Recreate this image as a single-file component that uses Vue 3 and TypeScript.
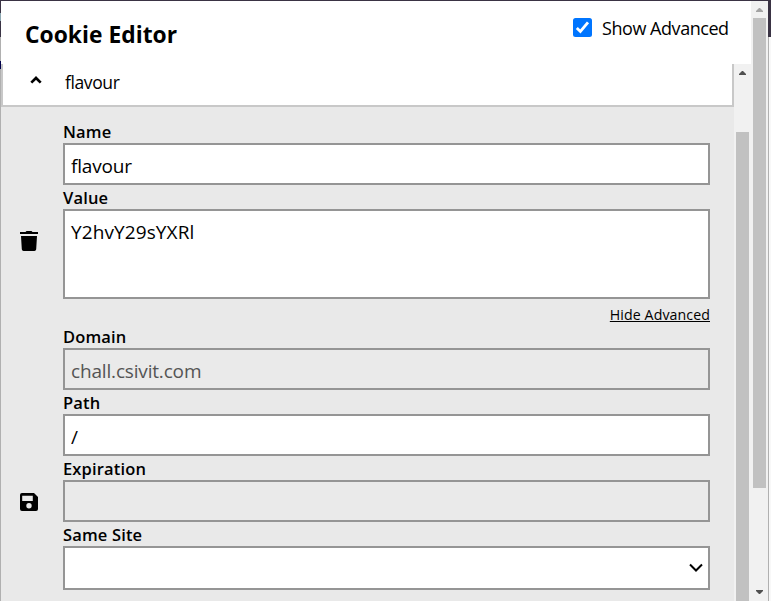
<script setup lang="ts">
import { ref } from 'vue'

const showAdvanced = ref<boolean>(true)
const name = ref<string>('flavour')
const value = ref<string>('Y2hvY29sYXRl')
const domain = ref<string>('chall.csivit.com')
const path = ref<string>('/')
const expiration = ref<string>('')
const sameSite = ref<string>('')
</script>

<template>
  <div class="window">
    <div class="edge-left"><i class="mark"></i><i class="tab"></i></div>
    <main class="popup">
      <header class="header">
        <h1 class="title"><span>Cookie Editor</span></h1>
        <label class="toggle">
          <input v-model="showAdvanced" class="native" type="checkbox" />
          <span class="check">
            <svg viewBox="0 0 19 19" width="19" height="19">
              <rect width="19" height="19" rx="2.5" fill="#0075ff" />
              <path v-if="showAdvanced" d="M3.8 9.9 7.4 13.5 15 4.3" fill="none" stroke="#fff" stroke-width="2.8" />
            </svg>
          </span>
          <span class="toggle-text">Show Advanced</span>
        </label>
      </header>
      <div class="scroller">
        <section class="cookie">
          <div class="cookie-head">
            <svg class="chevron" viewBox="0 0 14 10" width="14" height="10">
              <path d="M2.3 7.6 7 3l4.700 4.600" fill="none" stroke="#000" stroke-width="2.7" />
            </svg>
            <span class="cookie-name">flavour</span>
          </div>
          <div class="cookie-body">
            <div class="actions">
              <button class="icon-button trash" aria-label="Delete">
                <svg viewBox="0 0 18 20" width="18" height="20">
                  <path d="M0 1h5.500L6.500 0h5L12.500 1H18v2H0zM1 5h16l-.8 13.200Q16 20 14.400 20H3.600Q2 20 1.800 18.200z" />
                </svg>
              </button>
              <button class="icon-button save" aria-label="Save">
                <svg viewBox="0 0 18 18" width="18" height="18">
                  <path fill-rule="evenodd" d="M2 0h12l4 4v12a2 2 0 0 1-2 2H2a2 2 0 0 1-2-2V2a2 2 0 0 1 2-2zM2.200 2.700v5.300h10.600V2.700zM9 10a2.700 2.700 0 1 0 0 5.400A2.700 2.700 0 0 0 9 10z" />
                </svg>
              </button>
            </div>
            <form class="fields" @submit.prevent>
              <label class="label" for="name"><span>Name</span></label>
              <input id="name" v-model="name" class="control" />
              <label class="label" for="value"><span>Value</span></label>
              <textarea id="value" v-model="value" class="control area"></textarea>
              <a class="advanced-link" @click="showAdvanced = !showAdvanced"><span>Hide Advanced</span></a>
              <template v-if="showAdvanced">
                <label class="label" for="domain"><span>Domain</span></label>
                <input id="domain" v-model="domain" class="control" disabled />
                <label class="label" for="path"><span>Path</span></label>
                <input id="path" v-model="path" class="control" />
                <label class="label" for="expiration"><span>Expiration</span></label>
                <input id="expiration" v-model="expiration" class="control" disabled />
                <label class="label" for="site"><span>Same Site</span></label>
                <div id="site" class="control select" role="combobox">
                  {{ sameSite }}
                  <svg viewBox="0 0 14 10" width="14" height="10">
                    <path d="M1 1.500 7 7.500l6-6" fill="none" stroke="#000" stroke-width="2" />
                  </svg>
                </div>
              </template>
            </form>
          </div>
        </section>
        <div class="bar inner">
          <svg class="arrow" viewBox="0 0 17 17" width="17" height="17"><path d="M5 11h7v-1L9 7H8l-3 3z" fill="#505050" /></svg>
          <i class="thumb"></i>
        </div>
      </div>
    </main>
    <div class="bar outer">
      <svg class="arrow" viewBox="0 0 17 17" width="17" height="17"><path d="M5 11h7v-1L9 7H8l-3 3z" fill="#a3a3a3" /></svg>
      <i class="thumb"></i>
      <svg class="arrow" viewBox="0 0 17 17" width="17" height="17"><path d="M5 6h7v1l-3 3H8L5 7z" fill="#505050" /></svg>
    </div>
    <div class="edge-right"><i class="dark"></i></div>
  </div>
</template>

<style>
body {
  overflow: hidden;
}
</style>

<style scoped>
* {
  box-sizing: border-box;
}
.window {
  width: 771px;
  height: 601px;
  display: flex;
  border-top: 1px solid #3a3344;
  background: #fff;
  color: #000;
  font-family: 'Open Sans', 'Noto Sans', sans-serif;
  font-weight: 400;
  overflow: hidden;
}
.edge-left {
  width: 1px;
  flex: none;
  padding-top: 12px;
  background: linear-gradient(#3a3344 36px, #b0b0b0 36px);
}
.mark {
  display: block;
  height: 8px;
  background: #8ba6b0;
}
.tab {
  display: block;
  height: 8px;
  margin-top: 40px;
  background: #00004a;
}
.popup {
  width: 750px;
  flex: none;
}
.header {
  height: 63px;
  display: flex;
  justify-content: space-between;
  padding: 17px 23px 0 24px;
}
.title {
  margin: 0;
  height: 34px;
  font-size: 22.800px;
  line-height: 34px;
  font-weight: 700;
  letter-spacing: 0.030px;
  white-space: nowrap;
}
.toggle {
  height: 19px;
  display: flex;
  align-items: center;
  gap: 10px;
}
.native {
  position: absolute;
  opacity: 0;
}
.check {
  width: 19px;
  height: 19px;
}
.check svg,
.icon-button svg,
.arrow {
  display: block;
}
.toggle-text {
  width: 126px;
  font-size: 18px;
  line-height: 20px;
  letter-spacing: -0.450px;
  white-space: nowrap;
}
.scroller {
  height: 537px;
  display: flex;
}
.cookie {
  width: 733px;
  background: #e9e9e9;
}
.cookie-head {
  height: 43px;
  display: flex;
  align-items: flex-start;
  padding: 11px 0 0 26px;
  background: #fff;
  border: solid #c8c8c8;
  border-width: 0 2px 2px;
}
.chevron {
  margin-top: 0;
}
.cookie-name {
  margin-left: 22px;
  margin-top: -6px;
  font-size: 17.500px;
  line-height: 26px;
  letter-spacing: -0.400px;
}
.cookie-body {
  height: 494px;
  display: flex;
}
.actions {
  width: 62px;
  padding: 124px 0 0 19px;
}
.icon-button {
  display: block;
  padding: 0;
  border: 0;
  background: none;
}
.save {
  margin-top: 242px;
}
.fields {
  width: 647px;
  padding-top: 12px;
}
.label {
  display: block;
  height: 24px;
  font-size: 16.500px;
  line-height: 25px;
  font-weight: 600;
  letter-spacing: 0.150px;
  white-space: nowrap;
}
.control {
  display: block;
  width: 647px;
  height: 42px;
  margin: 0;
  padding: 4px 6px 0;
  border: 2px solid #959595;
  border-radius: 0;
  outline: 0;
  background: #fff;
  color: #000;
  font-family: inherit;
  font-weight: inherit;
  font-size: 19px;
  letter-spacing: -0.170px;
}
.control:disabled {
  background: #eaeaea;
  color: #545454;
}
.area {
  height: 90px;
  padding: 8px 6px;
  line-height: 27px;
  letter-spacing: 0.100px;
  resize: none;
  overflow: hidden;
}
.advanced-link {
  display: flex;
  justify-content: flex-end;
  height: 25px;
  font-size: 14.200px;
  line-height: 31px;
  letter-spacing: 0.080px;
  text-decoration: underline;
}
.select {
  height: 44px;
  display: flex;
  align-items: center;
  justify-content: flex-end;
  padding: 0 5px;
}
.bar {
  width: 17px;
  flex: none;
  background: #f1f1f1;
}
.thumb {
  display: block;
  width: 13px;
  margin-left: 2px;
  background: #c1c1c1;
}
.inner .thumb {
  height: 469px;
  margin-top: 51px;
}
.outer .thumb {
  height: 470px;
  margin-bottom: 96px;
}
.edge-right {
  width: 3px;
  background: linear-gradient(90deg, #b0b0b0 1px, #f8f8f8 1px);
}
.dark {
  display: block;
  height: 36px;
  background: #3a3344;
}
</style>
